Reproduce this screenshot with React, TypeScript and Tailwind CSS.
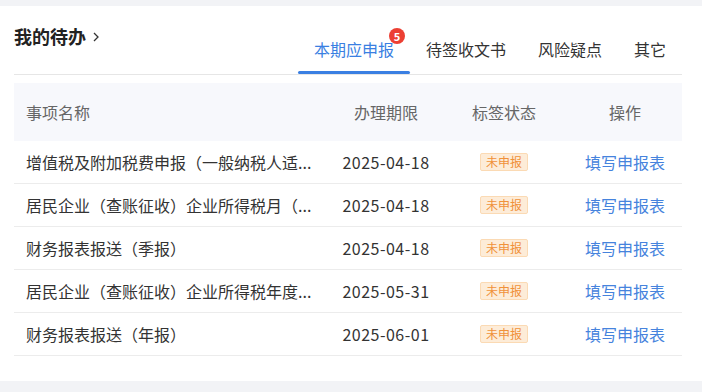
import React from "react";

const rows = [
  { name: "增值税及附加税费申报（一般纳税人适...", date: "2025-04-18" },
  { name: "居民企业（查账征收）企业所得税月（...", date: "2025-04-18" },
  { name: "财务报表报送（季报）", date: "2025-04-18" },
  { name: "居民企业（查账征收）企业所得税年度...", date: "2025-05-31" },
  { name: "财务报表报送（年报）", date: "2025-06-01" },
];

const tabs = ["本期应申报", "待签收文书", "风险疑点", "其它"];

export default function App() {
  return (
    <div
      className="w-[702px] h-[392px] bg-[#f2f3f6] pt-[6px] overflow-hidden"
      style={{ fontFamily: '"Noto Sans CJK SC", "Noto Sans", sans-serif' }}
    >
      <div className="bg-white h-[375px] pl-[14px] pr-[20px]">
        <div className="flex justify-between items-start border-b border-[#e6e6e6]">
          <div className="flex items-center gap-[7px] pt-[16px]">
            <span className="text-[18px] leading-[28px] font-bold text-[#222]">我的待办</span>
            <svg width="6" height="10" viewBox="0 0 6 10" className="mt-[1px]">
              <path d="M1 1 L5 5 L1 9" fill="none" stroke="#333" strokeWidth="1.3" />
            </svg>
          </div>
          <div className="flex pt-[31px]">
            {tabs.map((t, i) => (
              <div key={t} className="relative px-4 pb-[13px]">
                <span
                  className={
                    "text-[16px] leading-[20px] " +
                    (i === 0 ? "text-[#3a7fe2]" : "text-[#333]")
                  }
                >
                  {t}
                </span>
                {i === 0 && (
                  <>
                    <span className="absolute left-[91px] top-[-9px] w-[16px] h-[16px] rounded-full bg-[#ec3f33] text-white text-[11px] leading-[16px] text-center font-semibold">
                      5
                    </span>
                    <span className="absolute left-0 right-0 bottom-0 h-[3px] rounded-full bg-[#3a7fe2]" />
                  </>
                )}
              </div>
            ))}
          </div>
        </div>

        <div className="mt-[8px]">
          <div className="grid grid-cols-[311px_122px_114px_1fr] h-[58px] items-center bg-[#f7f8fc] text-[16px] text-[#666]">
            <div className="pl-[12px]">事项名称</div>
            <div className="text-center">办理期限</div>
            <div className="text-center">标签状态</div>
            <div className="text-center pl-[7px]">操作</div>
          </div>
          {rows.map((r, i) => (
            <div
              key={i}
              className="grid grid-cols-[311px_122px_114px_1fr] h-[43px] items-center border-b border-[#ececec] text-[16px]"
            >
              <div className="pl-[12px] text-[#333] whitespace-nowrap overflow-hidden">{r.name}</div>
              <div className="text-center text-[#333] tracking-[0.5px]">{r.date}</div>
              <div className="flex justify-center">
                <span className="px-[5px] h-[18px] leading-[16px] text-[12px] text-[#f0913a] bg-[#fdecd8] border border-[#fbdab4] rounded-[2px]">
                  未申报
                </span>
              </div>
              <div className="text-center pl-[7px] text-[#4683dd]">填写申报表</div>
            </div>
          ))}
        </div>
      </div>
    </div>
  );
}
